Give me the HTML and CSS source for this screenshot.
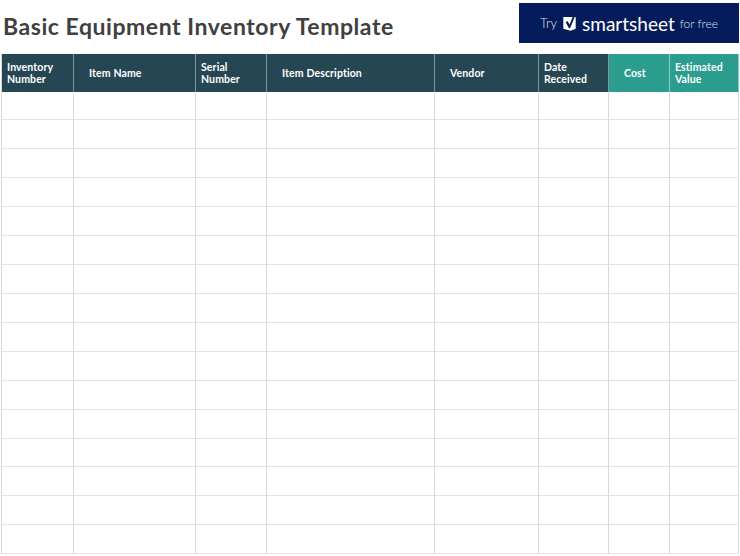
FILE: index.html
```html
<!DOCTYPE html>
<html lang="en">
<head>
<meta charset="utf-8">
<title>Basic Equipment Inventory Template</title>
<link rel="stylesheet" href="styles.css">
</head>
<body>
<header class="top">
  <h1 class="title">Basic Equipment Inventory Template</h1>
  <a class="promo">
    <span class="try">Try</span>
    <svg class="mark" viewBox="0 0 13 15" width="13" height="15" aria-hidden="true">
      <path d="M0.3 1H12.7V12.8L7.6 14.8 0.3 12.8Z" fill="#fff"/>
      <path d="M2.6 6L4.6 5.2 6.6 8.6 9.8 0.4 11.6 1.2 7 12.2 5.9 12.2Z" fill="#051c5c"/>
    </svg>
    <span class="brand">smartsheet</span>
    <span class="free">for free</span>
  </a>
</header>
<div class="sheet">
  <div class="hd">Inventory<br>Number</div>
  <div class="hd inset">Item Name</div>
  <div class="hd">Serial<br>Number</div>
  <div class="hd inset">Item Description</div>
  <div class="hd inset">Vendor</div>
  <div class="hd">Date<br>Received</div>
  <div class="hd teal inset">Cost</div>
  <div class="hd teal">Estimated<br>Value</div>
  <div class="c"></div><div class="c"></div><div class="c"></div><div class="c"></div><div class="c"></div><div class="c"></div><div class="c"></div><div class="c"></div>
  <div class="c"></div><div class="c"></div><div class="c"></div><div class="c"></div><div class="c"></div><div class="c"></div><div class="c"></div><div class="c"></div>
  <div class="c"></div><div class="c"></div><div class="c"></div><div class="c"></div><div class="c"></div><div class="c"></div><div class="c"></div><div class="c"></div>
  <div class="c"></div><div class="c"></div><div class="c"></div><div class="c"></div><div class="c"></div><div class="c"></div><div class="c"></div><div class="c"></div>
  <div class="c"></div><div class="c"></div><div class="c"></div><div class="c"></div><div class="c"></div><div class="c"></div><div class="c"></div><div class="c"></div>
  <div class="c"></div><div class="c"></div><div class="c"></div><div class="c"></div><div class="c"></div><div class="c"></div><div class="c"></div><div class="c"></div>
  <div class="c"></div><div class="c"></div><div class="c"></div><div class="c"></div><div class="c"></div><div class="c"></div><div class="c"></div><div class="c"></div>
  <div class="c"></div><div class="c"></div><div class="c"></div><div class="c"></div><div class="c"></div><div class="c"></div><div class="c"></div><div class="c"></div>
  <div class="c"></div><div class="c"></div><div class="c"></div><div class="c"></div><div class="c"></div><div class="c"></div><div class="c"></div><div class="c"></div>
  <div class="c"></div><div class="c"></div><div class="c"></div><div class="c"></div><div class="c"></div><div class="c"></div><div class="c"></div><div class="c"></div>
  <div class="c"></div><div class="c"></div><div class="c"></div><div class="c"></div><div class="c"></div><div class="c"></div><div class="c"></div><div class="c"></div>
  <div class="c"></div><div class="c"></div><div class="c"></div><div class="c"></div><div class="c"></div><div class="c"></div><div class="c"></div><div class="c"></div>
  <div class="c"></div><div class="c"></div><div class="c"></div><div class="c"></div><div class="c"></div><div class="c"></div><div class="c"></div><div class="c"></div>
  <div class="c"></div><div class="c"></div><div class="c"></div><div class="c"></div><div class="c"></div><div class="c"></div><div class="c"></div><div class="c"></div>
  <div class="c"></div><div class="c"></div><div class="c"></div><div class="c"></div><div class="c"></div><div class="c"></div><div class="c"></div><div class="c"></div>
  <div class="c"></div><div class="c"></div><div class="c"></div><div class="c"></div><div class="c"></div><div class="c"></div><div class="c"></div><div class="c"></div>
</div>
</body>
</html>
```
FILE: styles.css
```css
* { box-sizing: border-box; }
html, body { margin: 0; padding: 0; background: #fff; }
body {
  width: 740px;
  height: 556px;
  overflow: hidden;
  font-family: "Lato", "Open Sans", sans-serif;
}
.top {
  display: flex;
  justify-content: space-between;
  align-items: flex-start;
  height: 54px;
  padding: 3px 1px 0 3px;
}
.title {
  margin: 9px 0 0;
  font-size: 23px;
  line-height: 28px;
  font-weight: 700;
  letter-spacing: 0.55px;
  color: #404040;
  white-space: nowrap;
}
.promo {
  display: flex;
  align-items: center;
  justify-content: center;
  width: 220px;
  height: 40px;
  background: #051c5c;
  color: #dfe3ee;
}
.try { font-size: 13px; font-weight: 300; margin-right: 6px; }
.mark { margin-right: 6px; }
.brand { font-size: 19px; font-weight: 400; color: #fff; margin-right: 5px; }
.free { font-size: 12px; font-weight: 300; }
.sheet {
  display: grid;
  grid-template-columns: 72px 122px 71px 168px 104px 70px 61px 69px;
  grid-template-rows: 37.5px repeat(16, 28.93px);
  margin-left: 1px;
  width: 737px;
  border-left: 1px solid #d9d9d9;
}
.hd {
  display: flex;
  align-items: center;
  padding: 0 4px 0 5px;
  background: #264653;
  border-right: 1px solid #7d959d;
  color: #fff;
  font-size: 10.5px;
  line-height: 12px;
  font-weight: 700;
  letter-spacing: 0.12px;
}
.teal { background: #2a9d8f; border-right-color: #8fcbc3; }
.inset { padding-left: 15px; }
.c {
  border-right: 1px solid #d9d9d9;
  border-bottom: 1px solid #e3e3e3;
}
```
